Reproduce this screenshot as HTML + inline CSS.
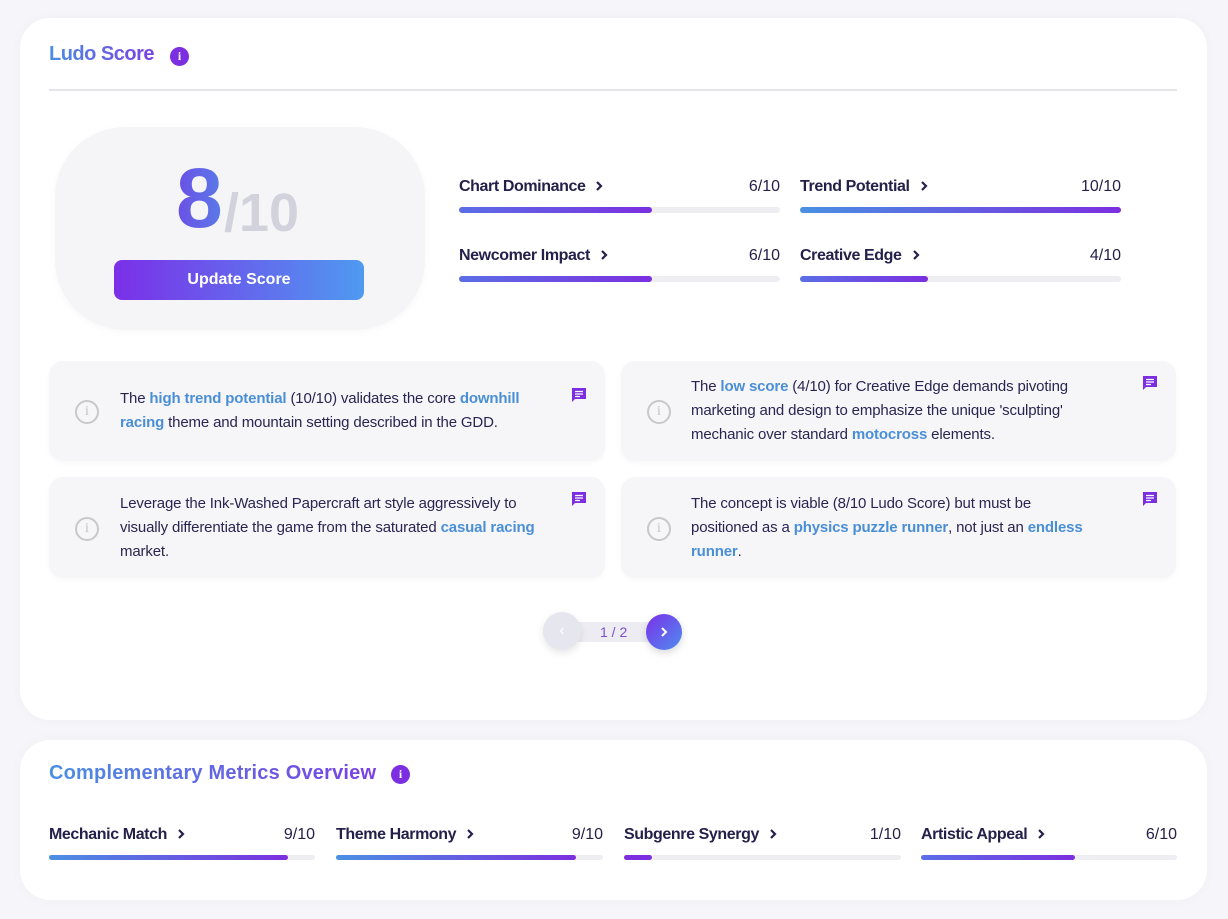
<!DOCTYPE html>
<html><head><style>
*{box-sizing:border-box;margin:0;padding:0}
body{width:1228px;height:919px;background:#f6f6fa;font-family:"Liberation Sans",sans-serif;position:relative;overflow:hidden;color:#2a2550}
.card{position:absolute;left:20px;width:1187px;background:#fff;border-radius:30px;box-shadow:0 0 12px rgba(0,0,0,0.03)}
.title{position:absolute;font-size:20px;font-weight:bold;background:linear-gradient(90deg,#4a90e2,#7b3fe4);-webkit-background-clip:text;background-clip:text;color:transparent;white-space:nowrap}
.info{position:absolute;width:19px;height:19px;border-radius:50%;background:#7b2fe0;color:#fff;font-size:12px;font-weight:bold;text-align:center;line-height:19px;font-family:"Liberation Serif",serif}
.m{position:absolute}
.m .lab{position:absolute;left:0;top:0;font-size:16px;font-weight:bold;color:#25204a;white-space:nowrap;letter-spacing:-0.4px}
.m .lab svg{margin-left:9px;vertical-align:-1px}
.m .val{position:absolute;right:0;top:0;font-size:16px;color:#25204a}
.m .bar{position:absolute;left:0;right:0;height:6px;border-radius:3px;background:#eeeef2}
.m .fill{height:100%;border-radius:3px;background:linear-gradient(90deg,#5b6ee6,#7b2fe0)}
.m .fill.b{background:linear-gradient(90deg,#4a90e2,#7b2fe0)}
.note{position:absolute;background:#f6f6f9;border-radius:14px;box-shadow:0 2px 6px rgba(0,0,0,0.03)}
.note .ic{position:absolute;left:26px;width:24px;height:24px;border:2px solid #c8c8cc;border-radius:50%;color:#c0c0c6;font-size:14px;text-align:center;line-height:20px;font-family:"Liberation Serif",serif}
.note .tx{position:absolute;left:71px;width:430px;font-size:15px;letter-spacing:-0.15px;line-height:24px;color:#2a2550}
.note .tx b{color:#4a8fd6;font-weight:bold}
.note .ch{position:absolute;right:18px;top:26px}
</style></head><body>
<div class="card" style="top:18px;height:702px"></div>
<div class="title" style="left:49px;top:43px;letter-spacing:-0.5px">Ludo Score</div>
<div class="info" style="left:170px;top:47px">i</div>
<div style="position:absolute;left:49px;top:89px;width:1128px;height:2px;background:#e4e4e8"></div>

<div style="position:absolute;left:55px;top:127px;width:370px;height:203px;border-radius:70px;background:#f5f5f8;box-shadow:0 2px 8px rgba(0,0,0,0.03)"></div>
<div style="position:absolute;left:176px;top:148px;font-size:84px;font-weight:bold;line-height:100px;background:linear-gradient(90deg,#6b4fe6,#5a7be8);-webkit-background-clip:text;background-clip:text;color:transparent">8</div>
<div style="position:absolute;left:224px;top:182px;font-size:54px;font-weight:bold;line-height:62px;color:#d2d2dc">/10</div>
<div style="position:absolute;left:114px;top:260px;width:250px;height:40px;border-radius:8px;background:linear-gradient(90deg,#7b2fe8,#4f9af0);color:#fff;font-size:16px;font-weight:bold;text-align:center;line-height:40px">Update Score</div>

<div class="m" style="left:459px;top:178px;width:321px;height:40px"><div class="lab">Chart Dominance<svg width="10" height="12" viewBox="0 0 10 12"><path d="M3 2l4 4-4 4" stroke="#25204a" stroke-width="2.2" fill="none"/></svg></div><div class="val">6/10</div><div class="bar" style="top:29px"><div class="fill" style="width:60%"></div></div></div>
<div class="m" style="left:800px;top:178px;width:321px;height:40px"><div class="lab">Trend Potential<svg width="10" height="12" viewBox="0 0 10 12"><path d="M3 2l4 4-4 4" stroke="#25204a" stroke-width="2.2" fill="none"/></svg></div><div class="val">10/10</div><div class="bar" style="top:29px"><div class="fill b" style="width:100%"></div></div></div>
<div class="m" style="left:459px;top:247px;width:321px;height:40px"><div class="lab">Newcomer Impact<svg width="10" height="12" viewBox="0 0 10 12"><path d="M3 2l4 4-4 4" stroke="#25204a" stroke-width="2.2" fill="none"/></svg></div><div class="val">6/10</div><div class="bar" style="top:29px"><div class="fill" style="width:60%"></div></div></div>
<div class="m" style="left:800px;top:247px;width:321px;height:40px"><div class="lab">Creative Edge<svg width="10" height="12" viewBox="0 0 10 12"><path d="M3 2l4 4-4 4" stroke="#25204a" stroke-width="2.2" fill="none"/></svg></div><div class="val">4/10</div><div class="bar" style="top:29px"><div class="fill" style="width:40%"></div></div></div>

<div class="note" style="left:49px;top:361px;width:556px;height:100px"><div class="ic" style="top:39px">i</div><div class="tx" style="top:26px;width:440px">The <b>high trend potential</b> (10/10) validates the core <b>downhill racing</b> theme and mountain setting described in the GDD.</div><svg class="ch" width="16" height="16" viewBox="0 0 16 16"><path d="M1 1h14v11H4l-3 3z" fill="#7b2fe0"/><path d="M4 4.5h8M4 7h8M4 9.5h5" stroke="#fff" stroke-width="1.3"/></svg></div>
<div class="note" style="left:621px;top:361px;width:555px;height:100px"><div class="ic" style="top:39px">i</div><div class="tx" style="left:70px;top:14px;width:405px">The <b>low score</b> (4/10) for Creative Edge demands pivoting marketing and design to emphasize the unique 'sculpting' mechanic over standard <b>motocross</b> elements.</div><svg class="ch" style="top:14px" width="16" height="16" viewBox="0 0 16 16"><path d="M1 1h14v11H4l-3 3z" fill="#7b2fe0"/><path d="M4 4.5h8M4 7h8M4 9.5h5" stroke="#fff" stroke-width="1.3"/></svg></div>
<div class="note" style="left:49px;top:477px;width:556px;height:101px"><div class="ic" style="top:40px">i</div><div class="tx" style="top:15px;width:430px">Leverage the Ink-Washed Papercraft art style aggressively to visually differentiate the game from the saturated <b>casual racing</b> market.</div><svg class="ch" style="top:14px" width="16" height="16" viewBox="0 0 16 16"><path d="M1 1h14v11H4l-3 3z" fill="#7b2fe0"/><path d="M4 4.5h8M4 7h8M4 9.5h5" stroke="#fff" stroke-width="1.3"/></svg></div>
<div class="note" style="left:621px;top:477px;width:555px;height:101px"><div class="ic" style="top:40px">i</div><div class="tx" style="left:70px;top:15px;width:405px">The concept is viable (8/10 Ludo Score) but must be positioned as a <b>physics puzzle runner</b>, not just an <b>endless runner</b>.</div><svg class="ch" style="top:14px" width="16" height="16" viewBox="0 0 16 16"><path d="M1 1h14v11H4l-3 3z" fill="#7b2fe0"/><path d="M4 4.5h8M4 7h8M4 9.5h5" stroke="#fff" stroke-width="1.3"/></svg></div>

<div style="position:absolute;left:575px;top:622px;width:80px;height:20px;background:#ececf2"></div>
<div style="position:absolute;left:600px;top:622px;font-size:14px;color:#7b4fd0;line-height:20px">1 / 2</div>
<div style="position:absolute;left:543px;top:612px;width:38px;height:38px;border-radius:50%;background:#e6e6ee;box-shadow:0 3px 8px rgba(0,0,0,0.1);color:#fff;text-align:center;line-height:38px;font-size:16px">‹</div>
<div style="position:absolute;left:646px;top:614px;width:36px;height:36px;border-radius:50%;background:linear-gradient(135deg,#7b2fe8,#4f8ef0);box-shadow:0 3px 8px rgba(0,0,0,0.15)"><svg style="position:absolute;left:13px;top:12px" width="10" height="12" viewBox="0 0 10 12"><path d="M3 2l4 4-4 4" stroke="#fff" stroke-width="2" fill="none"/></svg></div>

<div class="card" style="top:740px;height:160px"></div>
<div class="title" style="left:49px;top:762px;letter-spacing:0.2px">Complementary Metrics Overview</div>
<div class="info" style="left:391px;top:765px">i</div>
<div class="m" style="left:49px;top:826px;width:266px;height:40px"><div class="lab">Mechanic Match<svg width="10" height="12" viewBox="0 0 10 12"><path d="M3 2l4 4-4 4" stroke="#25204a" stroke-width="2.2" fill="none"/></svg></div><div class="val">9/10</div><div class="bar" style="top:29px;height:5px"><div class="fill b" style="width:90%"></div></div></div>
<div class="m" style="left:336px;top:826px;width:267px;height:40px"><div class="lab">Theme Harmony<svg width="10" height="12" viewBox="0 0 10 12"><path d="M3 2l4 4-4 4" stroke="#25204a" stroke-width="2.2" fill="none"/></svg></div><div class="val">9/10</div><div class="bar" style="top:29px;height:5px"><div class="fill b" style="width:90%"></div></div></div>
<div class="m" style="left:624px;top:826px;width:277px;height:40px"><div class="lab">Subgenre Synergy<svg width="10" height="12" viewBox="0 0 10 12"><path d="M3 2l4 4-4 4" stroke="#25204a" stroke-width="2.2" fill="none"/></svg></div><div class="val">1/10</div><div class="bar" style="top:29px;height:5px"><div class="fill" style="width:10%;background:#7b2fe0"></div></div></div>
<div class="m" style="left:921px;top:826px;width:256px;height:40px"><div class="lab">Artistic Appeal<svg width="10" height="12" viewBox="0 0 10 12"><path d="M3 2l4 4-4 4" stroke="#25204a" stroke-width="2.2" fill="none"/></svg></div><div class="val">6/10</div><div class="bar" style="top:29px;height:5px"><div class="fill" style="width:60%"></div></div></div>
</body></html>
